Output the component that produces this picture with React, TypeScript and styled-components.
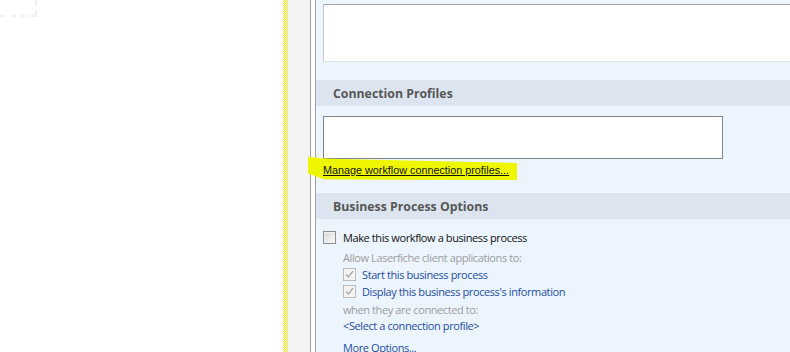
import React from "react";
import styled, { createGlobalStyle } from "styled-components";

const Global = createGlobalStyle`
  html, body { margin: 0; padding: 0; background: #fff; }
  body { font-family: "Open Sans", "Liberation Sans", sans-serif; }
`;

const Frame = styled.div`
  display: flex;
  width: 790px;
  height: 352px;
  overflow: hidden;
  background: #fff;
`;

const Canvas = styled.div`
  flex: none;
  width: 283px;
  background: #fff;
`;

const DashCorner = styled.div`
  width: 35px;
  height: 15px;
  border-right: 2px dashed #efefef;
  border-bottom: 2px dashed #efefef;
`;

const Splitter = styled.div`
  flex: none;
  width: 5px;
  background: repeating-conic-gradient(#f3e600 0 25%, #ffffff 0 50%) 0 0 / 2px 2px;
`;

const Gutter = styled.div`
  flex: none;
  width: 22px;
  background: #f4f4f4;
  border-right: 1px solid #a0a0a0;
`;

const Gap = styled.div`
  flex: none;
  width: 4px;
  background: #fff;
`;

const Panel = styled.div`
  flex: none;
  width: 500px;
  background: #ecf4fd;
  border-left: 1px solid #a0a0a0;
  padding-top: 4px;
  display: flex;
  flex-direction: column;
  align-items: flex-start;
  & > * {
    flex-shrink: 0;
  }
`;

const DescBox = styled.div`
  margin-left: 7px;
  width: 520px;
  height: 58px;
  box-sizing: border-box;
  background: #fff;
  border: 1px solid;
  border-color: #a2a2a2 #e2e2e2 #e2e2e2 #c9c9c9;
`;

const SectionHeader = styled.div<{ $mt: number }>`
  align-self: stretch;
  margin-top: ${(p) => p.$mt}px;
  height: 26px;
  padding-left: 17px;
  background: #dce5ef;
  display: flex;
  align-items: center;
  font-family: "Open Sans", sans-serif;
  font-weight: 700;
  font-size: 12.3px;
  color: #575757;
`;

const ProfilesBox = styled.div`
  margin: 10px 0 0 7px;
  width: 400px;
  height: 43px;
  box-sizing: border-box;
  background: #fff;
  border: 1px solid #80848c;
`;

const ManageLink = styled.a`
  position: relative;
  isolation: isolate;
  margin: 3px 0 0 7px;
  line-height: 16px;
  font-family: "Liberation Sans", Arial, sans-serif;
  font-size: 10.8px;
  color: #111;
  text-decoration: underline;
  cursor: pointer;
  &::before {
    content: "";
    position: absolute;
    left: -15px;
    right: -8px;
    top: -5px;
    bottom: -2px;
    background: #eef700;
    z-index: -1;
    clip-path: polygon(0 0, 10% 8%, 100% 26%, 100% 100%, 8% 98%, 0 72%);
  }
`;

const Options = styled.div`
  padding-left: 7px;
  display: flex;
  flex-direction: column;
  font-family: "Open Sans", sans-serif;
  font-size: 11px;
  letter-spacing: -0.4px;
`;

const Row = styled.div<{ $mt: number; $indent?: boolean }>`
  display: flex;
  align-items: center;
  height: 16px;
  margin-top: ${(p) => p.$mt}px;
  padding-left: ${(p) => (p.$indent ? 20 : 0)}px;
  white-space: nowrap;
`;

const Label = styled.span<{ $tone: "dark" | "gray" | "blue" }>`
  color: ${(p) => (p.$tone === "dark" ? "#111" : p.$tone === "gray" ? "#9d9d9d" : "#1d4ea3")};
`;

const Box = styled.span<{ $disabled?: boolean; $gap: number }>`
  flex: none;
  width: 13px;
  height: 13px;
  box-sizing: border-box;
  margin-right: ${(p) => p.$gap}px;
  border: 1px solid ${(p) => (p.$disabled ? "#bcbcbc" : "#8e8f8f")};
  background: ${(p) =>
    p.$disabled ? "#f4f4f4" : "linear-gradient(135deg, #d6d6d6, #fdfdfd)"};
  box-shadow: inset 0 0 0 1px ${(p) => (p.$disabled ? "#f4f4f4" : "#f0f0f0")};
  display: flex;
  align-items: center;
  justify-content: center;
`;

const Check = () => (
  <svg width="9" height="9" viewBox="0 0 9 9">
    <path d="M1 4.5 L3.5 7 L8 1" fill="none" stroke="#a9a9a9" strokeWidth="1.4" />
  </svg>
);

export default function App() {
  return (
    <>
      <Global />
      <Frame>
        <Canvas>
          <DashCorner />
        </Canvas>
        <Splitter />
        <Gutter />
        <Gap />
        <Panel>
          <DescBox />
          <SectionHeader $mt={18}>Connection Profiles</SectionHeader>
          <ProfilesBox />
          <ManageLink>Manage workflow connection profiles...</ManageLink>
          <SectionHeader $mt={15}>Business Process Options</SectionHeader>
          <Options>
            <Row $mt={10}>
              <Box $gap={7} />
              <Label $tone="dark">Make this workflow a business process</Label>
            </Row>
            <Row $mt={4} $indent>
              <Label $tone="gray">Allow Laserfiche client applications to:</Label>
            </Row>
            <Row $mt={1} $indent>
              <Box $disabled $gap={6}>
                <Check />
              </Box>
              <Label $tone="blue">Start this business process</Label>
            </Row>
            <Row $mt={1} $indent>
              <Box $disabled $gap={6}>
                <Check />
              </Box>
              <Label $tone="blue">Display this business process's information</Label>
            </Row>
            <Row $mt={2} $indent>
              <Label $tone="gray">when they are connected to:</Label>
            </Row>
            <Row $mt={0} $indent>
              <Label $tone="blue">&lt;Select a connection profile&gt;</Label>
            </Row>
            <Row $mt={6} $indent>
              <Label $tone="blue">More Options...</Label>
            </Row>
          </Options>
        </Panel>
      </Frame>
    </>
  );
}
